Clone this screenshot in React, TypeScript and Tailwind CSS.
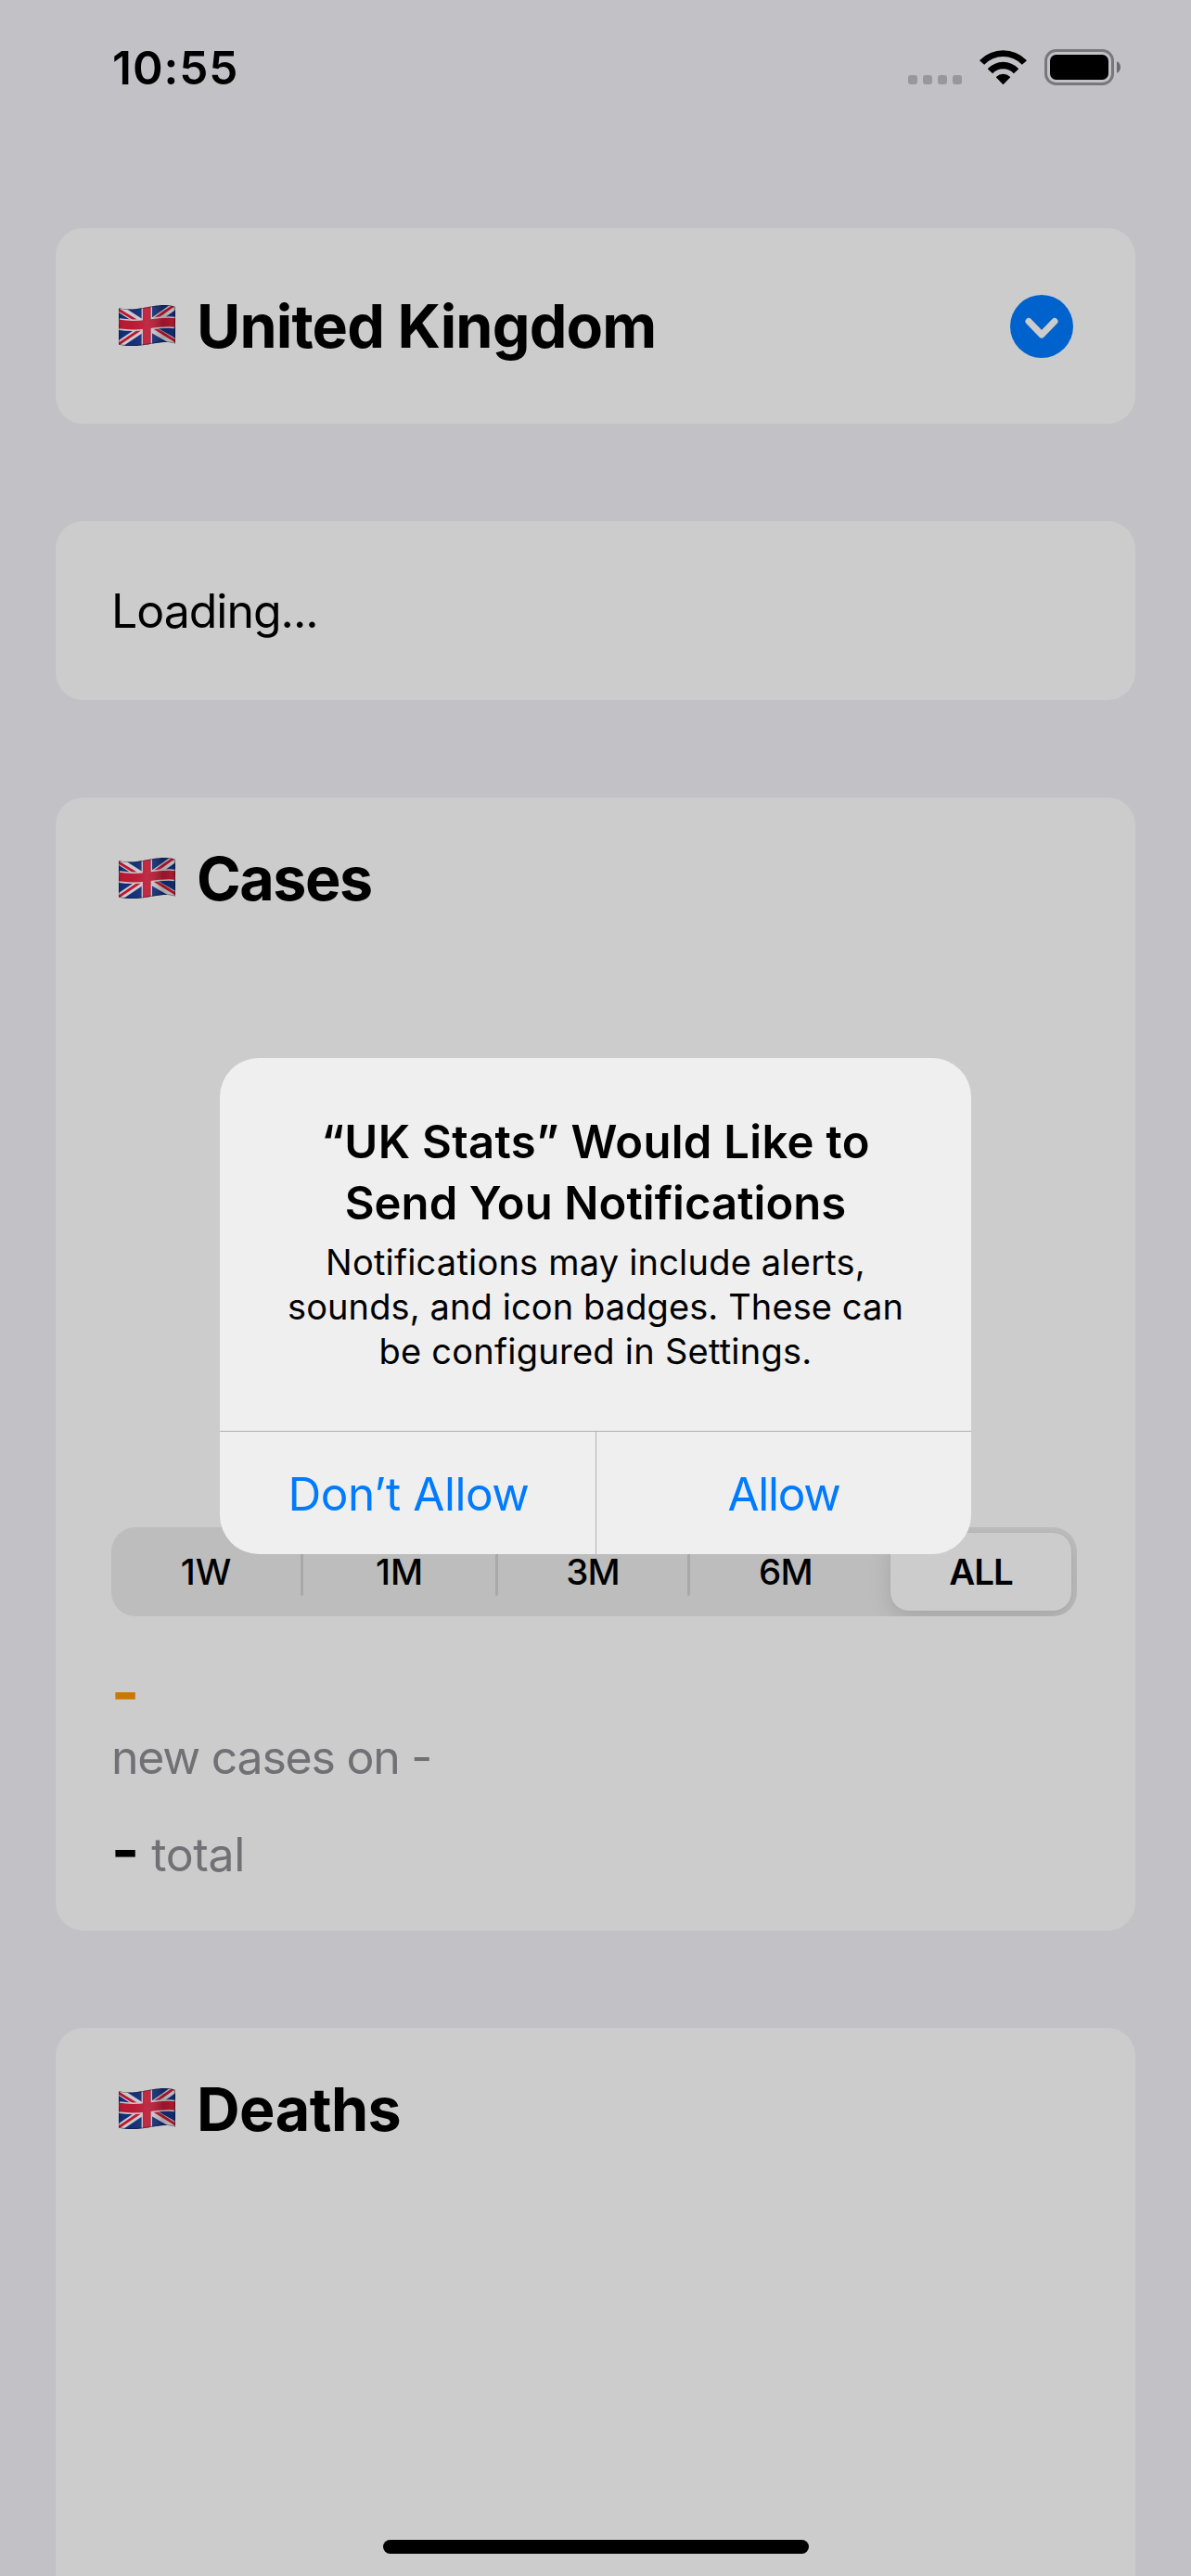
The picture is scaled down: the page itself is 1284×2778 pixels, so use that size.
import React from 'react';

function UnionFlag({ id }: { id: string }) {
  const shape =
    'M0 3 C6 4.6 12 5 20 4 C32 2.4 40 0 50 0 C55 0 58 .7 61 2 V41.5 C56 40 51 39.8 46 40.2 C36 41 27 44 15 44 C9 44 4 43.6 0 42.5 Z';
  return (
    <svg width="61" height="44" viewBox="0 0 61 44" className="mb-[2px] shrink-0">
      <defs>
        <clipPath id={`${id}-clip`}>
          <path d={shape} />
        </clipPath>
        <linearGradient id={`${id}-wave`} x1="0" x2="1" y1="0" y2="0">
          <stop offset="0" stopColor="#000" stopOpacity=".1" />
          <stop offset=".1" stopColor="#000" stopOpacity="0" />
          <stop offset=".48" stopColor="#fff" stopOpacity=".08" />
          <stop offset=".78" stopColor="#000" stopOpacity=".2" />
          <stop offset=".95" stopColor="#000" stopOpacity=".08" />
          <stop offset="1" stopColor="#000" stopOpacity=".28" />
        </linearGradient>
      </defs>
      <g clipPath={`url(#${id}-clip)`}>
        <rect width="61" height="44" fill="#132f78" />
        <g fill="none" stroke="#cfccd0" strokeWidth="7.8">
          <path d="M-2 2 L30 22.5 L63 41.5" />
          <path d="M-2 44 L30 22.5 L63 -1" />
        </g>
        <g fill="none" stroke="#c0152f" strokeWidth="2.8">
          <path d="M-2 4 L26 21" />
          <path d="M34 22 L63 40" />
          <path d="M-2 43.5 L26 24.5" />
          <path d="M34 18 L63 -2" />
        </g>
        <path d="M30.3 -2 V46" stroke="#cfccd0" strokeWidth="11.4" />
        <path d="M0 20.500 C12 22.500 20 22 30 20.800 C42 19 52 17.500 61 19" fill="none" stroke="#cfccd0" strokeWidth="12.600" />
        <path d="M30.3 -2 V46" stroke="#bb1a34" strokeWidth="8.8" />
        <path d="M0 20.500 C12 22.500 20 22 30 20.800 C42 19 52 17.500 61 19" fill="none" stroke="#bb1a34" strokeWidth="9.600" />
        <path d={shape} fill={`url(#${id}-wave)`} />
        <path d={shape} fill="none" stroke="#000" strokeOpacity=".35" strokeWidth="1.6" />
      </g>
    </svg>
  );
}

function StatusBar() {
  return (
    <header className="mt-[43px] mb-[143px] flex h-[60px] justify-between pr-[76px] pl-[121px]">
      <span className="text-[49.5px] leading-[60px] font-semibold tracking-[0.95px]">10:55</span>
      <div className="flex items-start gap-[19px] pt-[10px]">
        <svg width="58" height="39" viewBox="0 0 58 39" fill="#98979b">
          <rect x="0" y="28" width="10" height="10" rx="3" />
          <rect x="16" y="28" width="10" height="10" rx="3" />
          <rect x="32" y="28" width="10" height="10" rx="3" />
          <rect x="48" y="28" width="10" height="10" rx="3" />
        </svg>
        <svg width="51" height="39" viewBox="347.5 99 153 117">
          <path d="M349 134 A106 106 0 0 1 499 134 Q501 135 499 137 L485 149 A85 85 0 0 0 363 149 L349 137 Q347 135 349 134 Z" />
          <path d="M375 161 A69 69 0 0 1 473 161 Q474.500 162.500 473 164 L458 177.500 A46 46 0 0 0 390 177.500 L375 164 Q373.500 162.500 375 161 Z" />
          <path d="M402 188 A32 32 0 0 1 446 188 Q447.500 190 446 191.500 L425.500 212 Q424 213.500 422.500 212 L402 191.500 Q400.500 190 402 188 Z" />
        </svg>
        <svg width="82" height="39" viewBox="0 0 82 39">
          <rect x="1.5" y="1.500" width="72" height="36" rx="11" fill="none" stroke="#78777a" strokeWidth="3" />
          <rect x="6" y="6" width="63" height="27" rx="6.500" />
          <path d="M78 13.200 C83.300 15.400 83.300 23.600 78 25.800 Z" fill="#6b6a6e" />
        </svg>
      </div>
    </header>
  );
}

function Heading({ id, children, tracking }: { id: string; children: string; tracking: string }) {
  return (
    <div className="flex items-center gap-[23px] pl-[68px]">
      <UnionFlag id={id} />
      <h2 className={`text-[64.6px] leading-[79px] font-bold ${tracking}`}>{children}</h2>
    </div>
  );
}

function RangePicker() {
  const cell = 'flex items-center justify-center pt-[2px]';
  const rule = 'my-[22px] rounded-full bg-[#a9a9a9]';
  return (
    <div className="mt-[660px] ml-[60px] grid h-[96px] w-[1041px] grid-cols-[204px_3px_207px_3px_204px_3px_206px_10px_195px] overflow-hidden rounded-[26px] bg-[#bdbdbd] text-[38.5px] font-medium">
      <span className={cell}>1W</span>
      <i className={rule} />
      <span className={cell}>1M</span>
      <i className={rule} />
      <span className={`${cell} tracking-[-0.8px]`}>3M</span>
      <i className={rule} />
      <span className={`${cell} tracking-[-0.8px]`}>6M</span>
      <span />
      <span className={`${cell} my-[6px] rounded-[20px] bg-[#cccccc] font-semibold tracking-[-1px] shadow-[0_9px_24px_rgba(0,0,0,0.12),0_0_3px_rgba(0,0,0,0.05)]`}>
        ALL
      </span>
    </div>
  );
}

function PermissionAlert() {
  return (
    <div
      role="alertdialog"
      className="absolute top-[1141px] left-[237px] flex h-[535px] w-[810px] flex-col overflow-hidden rounded-[42px] bg-[#efefef] text-center"
    >
      <div className="h-[402px] pt-[58px]">
        <h1 className="text-[49px] leading-[66px] font-semibold">
          <span className="block tracking-[0.3px]">“UK Stats” Would Like to</span>
          <span className="block tracking-[0.06px]">Send You Notifications</span>
        </h1>
        <p className="mt-[6px] text-[38px] leading-[48px]">
          <span className="block tracking-[0.2px]">Notifications may include alerts,</span>
          <span className="block tracking-[0.1px]">sounds, and icon badges. These can</span>
          <span className="block tracking-[0.25px]">be configured in Settings.</span>
        </p>
      </div>
      <div className="grid flex-1 grid-cols-[405px_405px] border-t border-[#afafaf] text-[49.5px] text-[#007aff]">
        <button className="pt-[2px] pl-[2px] tracking-[-0.45px]">Don’t Allow</button>
        <button className="border-l border-[#b2b2b2] pt-[2px] tracking-[-1.28px]">Allow</button>
      </div>
    </div>
  );
}

export default function App() {
  const card = 'mx-[60px] rounded-[30px] bg-[#cccccc]';
  return (
    <div className="relative flex h-[2778px] w-[1284px] flex-col overflow-hidden bg-[#c2c1c6] font-['Inter',sans-serif] text-black">
      <StatusBar />
      <main className="flex flex-1 flex-col gap-[105px]">
        <section className={`${card} flex h-[211px] shrink-0 items-center justify-between pr-[67px]`}>
          <Heading id="country" tracking="tracking-[-0.85px]">United Kingdom</Heading>
          <svg width="68" height="68" viewBox="0 0 68 68">
            <circle cx="34" cy="34" r="34" fill="#0062cc" />
            <path d="M20 28.500 L34 43 L48 28.500" fill="none" stroke="#cccccc" strokeWidth="7" strokeLinecap="round" strokeLinejoin="round" />
          </svg>
        </section>
        <section className={`${card} flex h-[193px] shrink-0 items-center pl-[60px]`}>
          <p className="text-[50px] leading-[60px] tracking-[-1.03px]">Loading...</p>
        </section>
        <section className={`${card} h-[1222px] shrink-0 pt-[48px]`}>
          <Heading id="cases" tracking="tracking-[-1.48px]">Cases</Heading>
          <RangePicker />
          <div className="pl-[60px] text-[50px] leading-[60px] text-[#707075]">
            <p className="mt-[42px] text-[64.6px] leading-[79px] font-bold text-[#cc7700]">-</p>
            <p className="mt-px tracking-[-1.24px]">new cases on -</p>
            <p className="mt-[30px] flex items-baseline gap-[13px]">
              <span className="text-[64.6px] leading-[79px] font-bold text-black">-</span>
              <span className="tracking-[-0.38px]">total</span>
            </p>
          </div>
        </section>
        <section className={`${card} h-[700px] shrink-0 pt-[48px]`}>
          <Heading id="deaths" tracking="tracking-[-0.54px]">Deaths</Heading>
        </section>
      </main>
      <PermissionAlert />
      <div className="absolute bottom-[24px] left-[413px] h-[15px] w-[459px] rounded-full bg-black" />
    </div>
  );
}
